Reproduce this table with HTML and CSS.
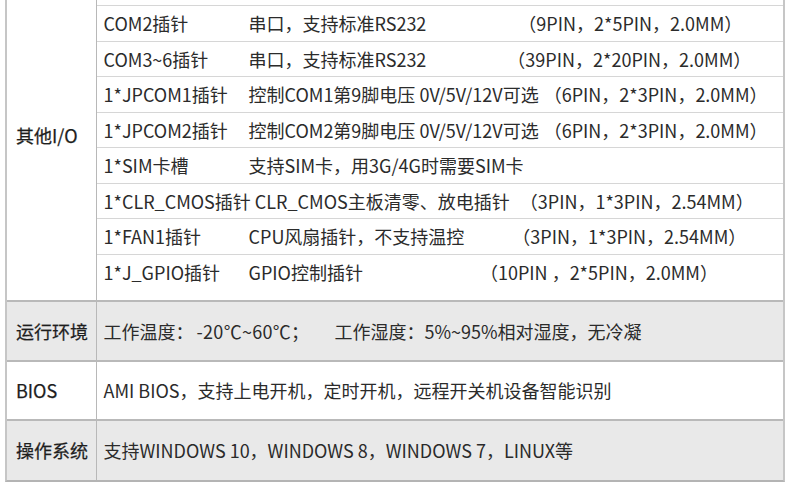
FILE: index.html
```html
<!DOCTYPE html>
<html lang="zh-CN">
<head>
<meta charset="utf-8">
<title>规格参数</title>
<link rel="stylesheet" href="styles.css">
</head>
<body>
<div class="spec-table">
  <section class="group group-io">
    <div class="label">其他I/O</div>
    <div class="rows">
      <div class="row row-cut"></div>
      <div class="row"><span class="name">COM2插针</span><span class="desc">串口，支持标准RS232</span><span class="spec m-com2">（9PIN，2*5PIN，2.0MM）</span></div>
      <div class="row"><span class="name">COM3~6插针</span><span class="desc">串口，支持标准RS232</span><span class="spec m-com3">（39PIN，2*20PIN，2.0MM）</span></div>
      <div class="row"><span class="name">1*JPCOM1插针</span><span class="desc">控制COM1第9脚电压 0V/5V/12V可选</span><span class="spec m-jp">（6PIN，2*3PIN，2.0MM）</span></div>
      <div class="row"><span class="name">1*JPCOM2插针</span><span class="desc">控制COM2第9脚电压 0V/5V/12V可选</span><span class="spec m-jp">（6PIN，2*3PIN，2.0MM）</span></div>
      <div class="row"><span class="name">1*SIM卡槽</span><span class="desc">支持SIM卡，用3G/4G时需要SIM卡</span></div>
      <div class="row"><span class="name">1*CLR_CMOS插针</span><span class="desc">CLR_CMOS主板清零、放电插针</span><span class="spec m-clr">（3PIN，1*3PIN，2.54MM）</span></div>
      <div class="row"><span class="name">1*FAN1插针</span><span class="desc">CPU风扇插针，不支持温控</span><span class="spec m-fan">（3PIN，1*3PIN，2.54MM）</span></div>
      <div class="row"><span class="name">1*J_GPIO插针</span><span class="desc">GPIO控制插针</span><span class="spec m-gpio">（10PIN ，2*5PIN，2.0MM）</span></div>
    </div>
  </section>
  <section class="group group-line shaded">
    <div class="label">运行环境</div>
    <div class="value">工作温度：<span class="temp">-20℃~60℃；</span><span class="gap">工作湿度：5%~95%相对湿度，无冷凝</span></div>
  </section>
  <section class="group group-line">
    <div class="label">BIOS</div>
    <div class="value">AMI BIOS，支持上电开机，定时开机，远程开关机设备智能识别</div>
  </section>
  <section class="group group-line shaded last">
    <div class="label">操作系统</div>
    <div class="value">支持WINDOWS 10，WINDOWS 8，WINDOWS 7，LINUX等</div>
  </section>
</div>
</body>
</html>
```

FILE: styles.css
```css
* { box-sizing: border-box; }

html, body {
  margin: 0;
  padding: 0;
  background: #ffffff;
}

body {
  font-family: "Noto Sans CJK SC", "Noto Sans", sans-serif;
  font-size: 18px;
  color: #2b2b2b;
  overflow: hidden;
}

.spec-table {
  margin: -30px 5px 0 5px;
  border-left: 2px solid #c6c6c6;
  border-right: 2px solid #c6c6c6;
  border-bottom: 2px solid #b4b4b4;
}

.group {
  display: grid;
  grid-template-columns: 90px 1fr;
}

.label {
  display: flex;
  align-items: center;
  padding-left: 9px;
  border-right: 1.5px solid #b8b8b8;
  font-weight: 400;
  color: #1e1e1e;
  -webkit-text-stroke: 0.25px #1e1e1e;
  white-space: nowrap;
}

.group-io .rows {
  padding-bottom: 9.5px;
}

.row {
  height: 35.5px;
  display: flex;
  align-items: center;
  padding-left: 6.5px;
  border-bottom: 1.5px solid #d6d6d6;
  white-space: pre;
}

.row:last-child {
  border-bottom: none;
}

.row-cut {
  height: 36px;
}

.name {
  display: inline-block;
  min-width: 141px;
  margin-right: 4px;
}

.spec { display: inline-block; }
.m-com2 { margin-left: 92px; }
.m-com3 { margin-left: 81px; }
.m-jp   { margin-left: 5px; }
.m-clr  { margin-left: 10px; }
.m-fan  { margin-left: 48px; }
.m-gpio { margin-left: 117px; }

.group-line {
  border-top: 2px solid #b9b9b9;
}

.group-line .value {
  display: flex;
  align-items: center;
  padding-left: 6.5px;
  white-space: nowrap;
}

.shaded {
  background: #e9e9e9;
}

.group-line:nth-child(2) { height: 60px; }
.group-line:nth-child(3) { height: 59px; }
.group-line:nth-child(4) { height: 61px; }

.temp { margin-left: 3px; letter-spacing: 0.3px; }
.gap { margin-left: 25px; }
```
